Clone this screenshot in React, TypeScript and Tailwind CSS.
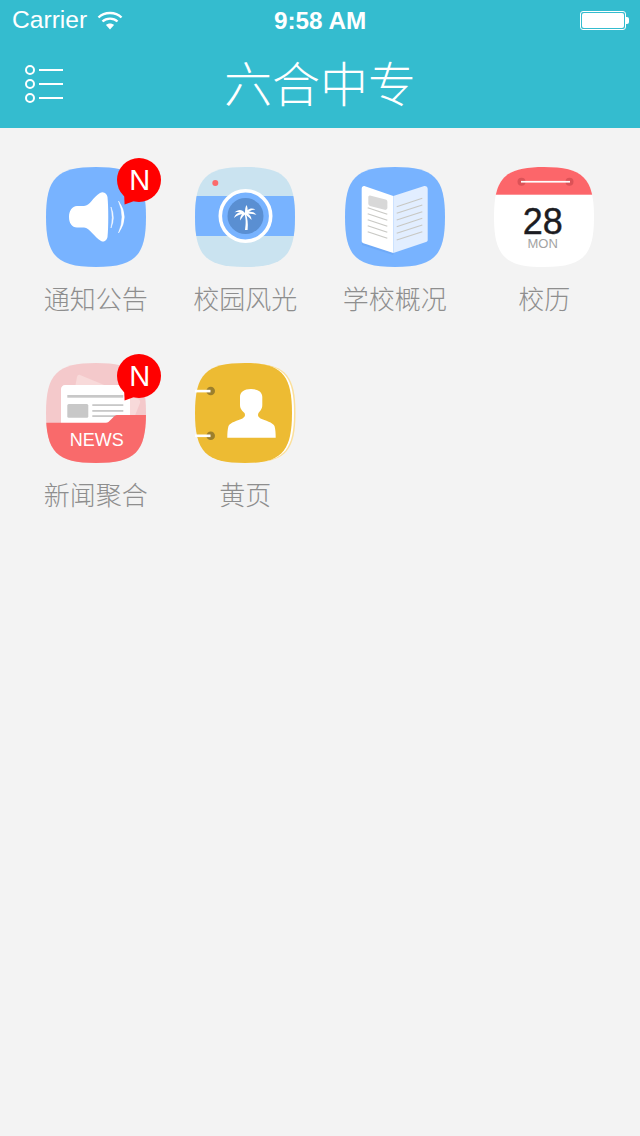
import React from 'react';

const SQUIRCLE = 'M50 0C89 0 100 11 100 50C100 89 89 100 50 100C11 100 0 89 0 50C0 11 11 0 50 0Z';

const IconFrame: React.FC<{ id: string; children: React.ReactNode }> = ({ id, children }) => (
  <svg viewBox="0 0 100 100" className="block w-[100px] h-[100px] overflow-visible">
    <defs>
      <clipPath id={id}>
        <path d={SQUIRCLE} />
      </clipPath>
    </defs>
    <g clipPath={`url(#${id})`}>{children}</g>
  </svg>
);

const SpeakerIcon = () => (
  <IconFrame id="clip-speaker">
    <rect width="100" height="100" fill="#78b3ff" />
    <path
      d="M31 39C26 39 23 44 23 50C23 56 26 60.5 31 60.5L38 60.5C44 61 48 70 55 74C59 76 61 72 61.5 70C62.5 60 62.5 40 61.5 30C61 27 58 24 54 26C47 30 44 39 38 39Z"
      fill="#fff"
    />
    <path d="M65 40Q69.6 50.5 65 61Q67.6 50.5 65 40Z" fill="#fff" stroke="#fff" strokeWidth="0.5" />
    <path d="M72.5 34Q84 50 72.5 66Q79.5 50 72.5 34Z" fill="#fff" stroke="#fff" strokeWidth="0.5" />
  </IconFrame>
);

const CameraIcon = () => (
  <IconFrame id="clip-camera">
    <rect width="100" height="100" fill="#cae3f0" />
    <rect y="29" width="100" height="40" fill="#78b3ff" />
    <circle cx="20.3" cy="16" r="3" fill="#fb6a6c" />
    <circle cx="50.5" cy="49" r="25.2" fill="#78b3ff" stroke="#fff" strokeWidth="3.6" />
    <circle cx="50.5" cy="49" r="18" fill="#5a8fd2" />
    {/* palm tree */}
    <path d="M49.5 47C51 52 51 56 50 63L52.6 63C53.4 56 52.4 51 51 47Z" fill="#fff" />
    <path
      d="M50 46C47 42 43 42 39.5 45.5C42 44.8 44 45 45 45.6C42 46 40 48 39 51C42 48.5 45 47.5 47 47.3C45.5 49 45 51 45.2 53.5C47 50.5 48.5 48.5 50 47.5C52 48.5 55 51 56.5 53C56.5 50 55 48 53 46.8C56 46.6 59 47 61.5 48C60 45.5 57 44.5 54 44.8C56 43.2 58 42.5 60.5 42.5C57.5 41 54.5 41.5 52.5 43.2C52.8 41.5 52.4 39.8 51.5 38C50.4 40 50 42 50 46Z"
      fill="#fff"
    />
  </IconFrame>
);

const BookIcon = () => (
  <IconFrame id="clip-book">
    <rect width="100" height="100" fill="#78b3ff" />
    <path d="M17 25L48.3 33L48.3 88L17 78Z" fill="#5f9bea" opacity="0.35" />
    <path
      d="M16.7 21.5C16.7 19.7 18.2 18.6 20 19.2L48.3 29L48.3 86L18.5 76.3C17.4 75.9 16.7 75 16.7 74Z"
      fill="#fff"
    />
    <path
      d="M48.3 29L78.5 19.2C80.8 18.5 82.7 19.7 82.7 21.8L82.7 73C82.7 74 82 74.8 81 75.1L48.3 86Z"
      fill="#e2eeff"
    />
    <path d="M25 28.6L40.5 32.6C41.6 32.9 42.4 33.8 42.4 35L42.4 40.6C42.4 42.2 41.2 43.2 39.6 42.8L25 38.9C24 38.6 23.3 37.7 23.3 36.6L23.3 30.4C23.3 29.2 24 28.4 25 28.6Z" fill="#d8d8d8" />
    <g stroke="#c8c8c4" strokeWidth="1.2">
      <path d="M22.7 40.7L42.3 47.3" />
      <path d="M22.7 46.7L42.3 53.3" />
      <path d="M22.7 52.7L42.3 59.3" />
      <path d="M22.7 58.7L42.3 65.3" />
      <path d="M22.7 64.7L42.3 71.3" />
      <path d="M51.7 39.7L77.3 31.3" />
      <path d="M51.7 46.3L77.3 38" />
      <path d="M51.7 53L77.3 44.7" />
      <path d="M51.7 59.7L77.3 51.3" />
      <path d="M51.7 66.3L77.3 58" />
      <path d="M51.7 73L77.3 64.7" />
    </g>
  </IconFrame>
);

const CalendarIcon = () => (
  <IconFrame id="clip-calendar">
    <rect width="100" height="100" fill="#fff" />
    <rect width="100" height="27.7" fill="#fc666a" />
    <circle cx="27.5" cy="14.7" r="4" fill="#dc5257" />
    <circle cx="75.5" cy="14.7" r="4" fill="#dc5257" />
    <rect x="27" y="13.9" width="49" height="1.7" fill="#fff" />
    <text x="48.7" y="67" textAnchor="middle" fontSize="36" fontWeight="500" fill="#1c1c22" fontFamily="'Liberation Sans', sans-serif" stroke="#1c1c22" strokeWidth="0.4">
      28
    </text>
    <text x="48.7" y="80.7" textAnchor="middle" fontSize="13" fill="#a3a3a3" fontFamily="'Liberation Sans', sans-serif">
      MON
    </text>
  </IconFrame>
);

const NewsIcon = () => (
  <IconFrame id="clip-news">
    <rect width="100" height="100" fill="#f4c9cb" />
    <path d="M34 12L92 36C94 37 94.5 38 94 40L86 60L28 30L31 14C31.5 12.5 32.5 11.5 34 12Z" fill="#f8dada" />
    <path d="M15 26C15 23.8 16.8 22 19 22L80 22C82.2 22 84 23.8 84 26L84 62L15 62Z" fill="#fff" />
    <rect x="21.3" y="32" width="56" height="2.7" fill="#c8c8c8" />
    <rect x="21.3" y="41" width="21" height="13.7" rx="1.5" fill="#c8c8c8" />
    <rect x="46.3" y="41.2" width="31" height="1.8" fill="#c8c8c8" />
    <rect x="46.3" y="47" width="31" height="1.8" fill="#c8c8c8" />
    <rect x="46.3" y="52.2" width="31" height="1.8" fill="#c8c8c8" />
    <path d="M0 59.7L60 59.7C62 59.7 63 58.5 64.5 57L68 53.5C69 52.5 70 52 72 52L100 52L100 100L0 100Z" fill="#f96a6b" />
    <text x="50.7" y="82.7" textAnchor="middle" fontSize="18" fill="#fff" fontFamily="'Liberation Sans', sans-serif">
      NEWS
    </text>
  </IconFrame>
);

const ContactsIcon = () => (
  <svg viewBox="0 0 100 100" className="block w-[100px] h-[100px] overflow-visible">
    <path d="M50 0C90 0 100.5 11 100.5 50C100.5 89 90 100 50 100Z" fill="#fbdf9a" />
    <path d="M50 0.5C88 0.5 99 11 99 50C99 89 88 99.5 50 99.5Z" fill="#fff" />
    <path d="M50 0C86 0 97 11 97 50C97 89 86 100 50 100C11 100 0 89 0 50C0 11 11 0 50 0Z" fill="#edbb33" />
    <circle cx="15.7" cy="28" r="4.3" fill="#9c7f2c" />
    <circle cx="15.7" cy="72.7" r="4.3" fill="#9c7f2c" />
    <rect x="0" y="26.8" width="15.5" height="2.6" fill="#fff" />
    <rect x="0" y="71.5" width="15.5" height="2.6" fill="#fff" />
    <path
      d="M45 34C45 29 49 26 56 26C63 26 67.3 29 67.3 34L67.3 42C67.3 46 65 48 63.5 50C62.5 52.5 63 54 65.5 55.5C70 57.5 78 59.5 79.5 63C80.4 66 80.7 70 80.7 74.7L32.3 74.7C32.3 70 32.6 66 33.5 63C35 59.5 43 57.5 47.5 55.5C50 54 50.5 52.5 49.5 50C47.5 48 45 46 45 42Z"
      fill="#fff"
    />
  </svg>
);

const Badge = () => (
  <div className="absolute left-[71px] top-[-9px] w-[44px] h-[47px]">
    <svg viewBox="0 0 44 47" className="absolute inset-0 w-full h-full">
      <circle cx="22" cy="22" r="22" fill="#ff0000" />
      <path d="M7 34L7.6 46.5L20 42Z" fill="#ff0000" />
    </svg>
    <span className="absolute left-[2px] right-0 top-0 h-[44px] flex items-center justify-center text-[29px] leading-none text-white font-['Liberation_Sans',sans-serif]">
      N
    </span>
  </div>
);

const items: { label: string; icon: React.ReactNode; badge?: boolean }[] = [
  { label: '通知公告', icon: <SpeakerIcon />, badge: true },
  { label: '校园风光', icon: <CameraIcon /> },
  { label: '学校概况', icon: <BookIcon /> },
  { label: '校历', icon: <CalendarIcon /> },
  { label: '新闻聚合', icon: <NewsIcon />, badge: true },
  { label: '黄页', icon: <ContactsIcon /> },
];

const StatusBar = () => (
  <div className="relative flex items-center justify-between h-10 pl-3 pr-[11px] text-white font-['Liberation_Sans',sans-serif]">
    <div className="flex items-center gap-[10px]">
      <span className="text-[24.6px] leading-none">Carrier</span>
      <svg viewBox="0 0 26 20" className="w-[26px] h-5">
        <path d="M1.5 7.5C7.5 1.5 18.5 1.5 24.5 7.5" fill="none" stroke="#fff" strokeWidth="2.4" />
        <path d="M5.5 11.5C9.5 7.7 16.5 7.7 20.5 11.5" fill="none" stroke="#fff" strokeWidth="2.4" />
        <path d="M9 15C11 13 15 13 17 15L13 19.5Z" fill="#fff" />
      </svg>
    </div>
    <span className="absolute left-[274px] top-[8px] text-[24.3px] leading-[26px] font-bold">9:58 AM</span>
    <div className="flex items-center">
      <div className="w-[46px] h-[19px] rounded-[3px] border border-white p-[1px]">
        <div className="w-full h-full rounded-[2px] bg-white" />
      </div>
      <div className="w-[3px] h-[7px] rounded-r-[2px] bg-white" />
    </div>
  </div>
);

export default function App() {
  return (
    <div className="min-h-[1136px] bg-[#f3f3f3] font-['Noto_Sans_CJK_SC','Liberation_Sans',sans-serif]">
      <header className="bg-[#34bccf]">
        <StatusBar />
        <div className="flex items-center h-[88px] px-6 pb-[1px]">
          <svg viewBox="0 0 40 36" className="w-10 h-9 shrink-0 overflow-visible">
            <g fill="none" stroke="#fff" strokeWidth="2">
              <circle cx="6" cy="4" r="4" />
              <circle cx="6" cy="18" r="4" />
              <circle cx="6" cy="32" r="4" />
              <path d="M15 4H39M15 18H39M15 32H39" />
            </g>
          </svg>
          <h1 className="flex-1 text-center text-[48px] leading-none font-light text-white -translate-y-[3px]">六合中专</h1>
          <div className="w-10 shrink-0" />
        </div>
      </header>

      <div className="grid grid-cols-4 px-[21px] pt-[39px]">
        {items.map((item) => (
          <div key={item.label} className="flex flex-col items-center h-[196px]">
            <div className="relative w-[100px] h-[100px]">
              {item.icon}
              {item.badge && <Badge />}
            </div>
            <span className="mt-[14px] text-[26px] leading-[34px] font-light text-[#8e8e8e] whitespace-nowrap">
              {item.label}
            </span>
          </div>
        ))}
      </div>
    </div>
  );
}
